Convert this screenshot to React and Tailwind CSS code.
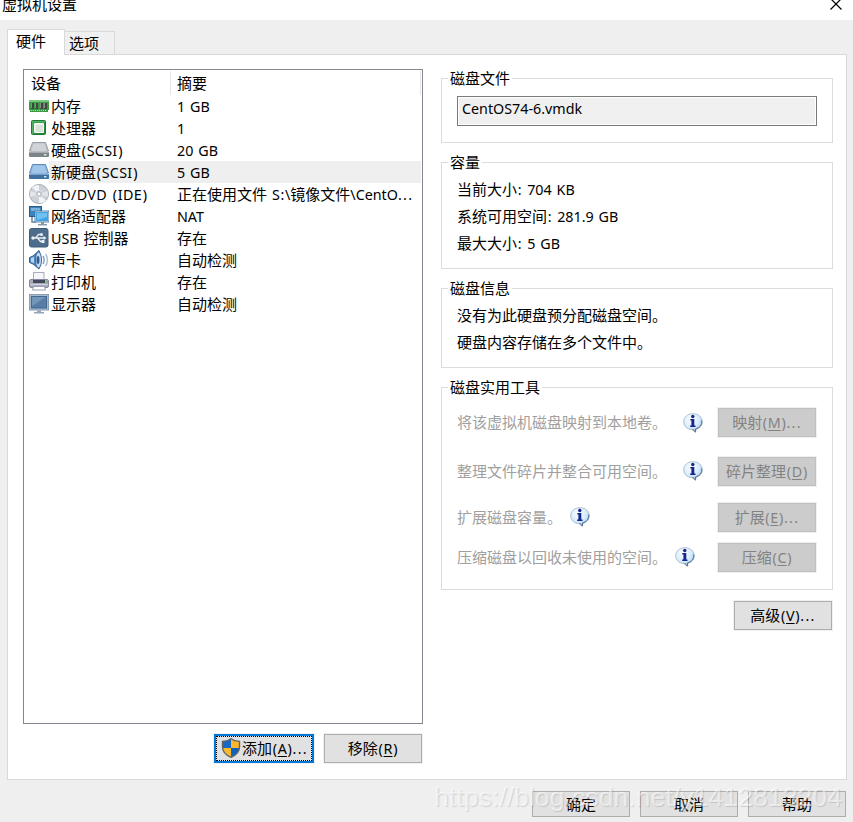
import React from 'react'
import clsx from 'clsx'

// ─── Text helpers ─────────────────────────────────────────────────────────────
// Latin runs use a narrower face than the CJK glyphs around them
function Latin({ text }) {
  return (
    <span className="font-['Noto_Sans'] text-[14.3px] leading-none whitespace-pre [word-spacing:1.2px]">
      {text.split(/(\.\.\.|[():])/).map((part, i) => (
        i % 2 ? (
          <span key={i} className={part === '...' ? 'tracking-[1.3px]' : 'px-[0.7px]'}>{part}</span>
        ) : (
          <span key={i} className={clsx(text.includes('(') && 'tracking-[0.3px]')}>{part}</span>
        )
      ))}
    </span>
  )
}

function T({ children }) {
  return children.split(/([\x20-\x7e]+)/).map((part, i) => (i % 2 ? <Latin key={i} text={part} /> : part))
}

function Mnemonic({ label, letter, dots }) {
  return (
    <span className="-mt-px whitespace-nowrap">
      {label}
      <Latin text="(" />
      <span className="font-['Noto_Sans'] text-[14.3px] leading-none underline underline-offset-2">{letter}</span>
      <Latin text={dots ? ')...' : ')'} />
    </span>
  )
}

// ─── Device icons ─────────────────────────────────────────────────────────────
function MemoryIcon() {
  return (
    <>
      <path d="M0 4h20v10h-1v2H1v-2H0z" fill="#3c9a45" />
      <path d="M0 4h20v2H0z" fill="#7cc67e" />
      <path d="M2 7h3v6H2zM6 7h3v6H6zM11 7h3v6h-3zM15 7h3v6h-3z" fill="#3f4541" />
      <path d="M2 7h1v5H2zM6 7h1v5H6zM11 7h1v5h-1zM15 7h1v5h-1z" fill="#8a918c" />
      <path d="M2 14.5h16" stroke="#c9d98a" strokeDasharray="1 1" />
    </>
  )
}

function CpuIcon() {
  return (
    <>
      <rect x="2.500" y="2.500" width="14" height="14" rx="1" fill="#258b3d" stroke="#1d7a37" />
      <path d="M3 3h13v1.500H4.500V16H3z" fill="#55b364" />
      <rect x="5" y="5" width="10" height="10" rx="1" fill="#f6f8f5" />
      <rect x="6.500" y="6.500" width="7.500" height="7.500" fill="#dbe2da" />
    </>
  )
}

function DiskIcon({ blue }) {
  return (
    <>
      <path d="M3.500 2.500h13L19.500 11H.5z" fill={blue ? '#8db5e0' : '#bcc2c8'} stroke={blue ? '#5d89bd' : '#969da5'} />
      <path d="M4.500 3.500h11l2.500 8H2z" fill={blue ? '#a2c6ea' : '#d0d4d8'} />
      <rect x="0" y="12" width="20" height="5" rx="1" fill={blue ? '#436f9f' : '#7c838b'} />
      <path d="M.5 11.500h19v1.500H.5z" fill={blue ? '#79a4d2' : '#a5abb1'} />
      <rect x="15" y="14" width="2.500" height="1.500" fill={blue ? '#b9e8f5' : '#d1f0c4'} />
    </>
  )
}

function DiscIcon() {
  return (
    <>
      <circle cx="10" cy="10" r="9.500" fill="#ccd1d8" stroke="#a4abb5" />
      <path d="M10 10 3 3.500A9 9 0 0 1 10 1zM10 10l7 6.500A9 9 0 0 1 10 19z" fill="#f2f4f7" />
      <path d="M10 10 1.500 13A9 9 0 0 1 1.500 7zM10 10l8.500-3a9 9 0 0 1 0 6z" fill="#e3e6eb" />
      <circle cx="10" cy="10" r="3.500" fill="#b3bac4" stroke="#e8ebef" />
      <circle cx="10" cy="10" r="1.500" fill="#fff" />
    </>
  )
}

function NetworkIcon() {
  return (
    <>
      <rect x=".5" y=".5" width="12" height="10" fill="#3f83bd" stroke="#285b8a" />
      <path d="M2 2h9v3H2z" fill="#7bb2dd" />
      <path d="M3 11v5h4" fill="none" stroke="#6e8499" strokeWidth="1.500" />
      <rect x="6.500" y="5.500" width="13" height="10" fill="#3fa3e4" stroke="#dce8f1" />
      <path d="M8 7h10v4L8 14z" fill="#6fc1f1" />
      <rect x="6" y="5" width="14" height="11" fill="none" stroke="#386a97" strokeWidth=".8" />
      <path d="M12 16h3v2h3v1.500H9V18h3z" fill="#8799aa" />
    </>
  )
}

function UsbIcon() {
  return (
    <>
      <rect x=".5" y=".5" width="18.500" height="18.500" rx="2" fill="#4e6d8c" stroke="#3e5c7a" />
      <g fill="none" stroke="#e9eff5" strokeWidth="1.300">
        <path d="M4 10h11M6.500 10l3-3.500h2.500M8.500 10l3 3.500h2" />
      </g>
      <circle cx="4" cy="10" r="1.700" fill="#e9eff5" />
      <circle cx="12.500" cy="6.500" r="1.500" fill="#e9eff5" />
      <path d="M12.500 12h3v3h-3zM14.500 8l3 2-3 2z" fill="#e9eff5" />
    </>
  )
}

function SoundIcon() {
  return (
    <>
      <path d="M.5 7.500 4 6l6-5.500c2 4 2 14 0 18.500L4 14 .5 12.500z" fill="#4d89c2" stroke="#35608f" />
      <path d="M2 8l3-1v6l-3-1z" fill="#b4d4ef" />
      <ellipse cx="9.500" cy="10" rx="3" ry="8" fill="#c5dbef" stroke="#3c6897" />
      <ellipse cx="9" cy="10" rx="1.500" ry="4" fill="#2f5e92" />
      <path d="M14 6c1.500 2 1.500 6 0 8" fill="none" stroke="#7b9bc0" strokeWidth="1.400" />
      <path d="M16.500 4c2.500 3 2.500 9 0 12" fill="none" stroke="#a9bed7" strokeWidth="1.400" />
    </>
  )
}

function PrinterIcon() {
  return (
    <>
      <rect x="4.500" y=".5" width="10.500" height="8" fill="#f5f6fa" stroke="#a6abbd" />
      <rect x=".5" y="7.500" width="19" height="8" rx="1.500" fill="#a9abbd" stroke="#85889c" />
      <path d="M4 8h12v3H4z" fill="#43485a" />
      <path d="M1 12h18v1H1z" fill="#d0d2de" />
      <rect x="17" y="9.500" width="2" height="1.500" fill="#62bb56" />
      <path d="M4.500 14.500h11l1 3.500h-13z" fill="#fff" stroke="#9b9eb2" />
    </>
  )
}

function DisplayIcon() {
  return (
    <>
      <rect x=".5" y=".5" width="19" height="15.500" fill="#a6bacd" stroke="#8b9fb4" />
      <rect x="2.500" y="2.500" width="15" height="11.500" fill="#557da5" stroke="#45698e" />
      <path d="M3 3h14L3 12z" fill="#7397bb" />
      <path d="M8 16.500h4V18h3v1.500H5V18h3z" fill="#93a6b8" />
    </>
  )
}

function InfoIcon() {
  return (
    <svg viewBox="0 0 20 20" className="size-5 shrink-0">
      <defs>
        <radialGradient id="bubble" cx=".4" cy=".3" r=".75">
          <stop offset="0" stopColor="#fff" />
          <stop offset=".6" stopColor="#d5ebfb" />
          <stop offset="1" stopColor="#8fbce6" />
        </radialGradient>
      </defs>
      <path d="M10 .7c5.300 0 9.200 3.300 9.200 8 0 4-2.700 6.600-6.200 7.500l-.5 3.300L9 16.600C4 16.300.7 13.200.7 8.700c0-4.700 4-8 9.300-8z" fill="url(#bubble)" stroke="#a5b4c5" strokeWidth=".8" />
      <path d="M18.800 7.500c.4 5-2.600 7.500-6.200 8.400l-.3 3-2.800-3" fill="none" stroke="#526d91" />
      <circle cx="9.800" cy="3.500" r="1.700" fill="#17268d" />
      <path d="M7.300 6h4v6.500h1.200V14H7.200v-1.500h1.200V7.500H7.300z" fill="#17268d" />
    </svg>
  )
}

function ShieldIcon() {
  return (
    <svg viewBox="0 0 20 20" className="-mt-px size-5 shrink-0">
      <path d="M10 .8C7.500 2.700 4.500 3.300 1.500 3.400V10H10z" fill="#1768c5" />
      <path d="M10 .8c2.500 1.900 5.500 2.500 8.500 2.600V10H10z" fill="#fcb62b" />
      <path d="M1.500 10c.5 4 4 7.500 8.500 9.300V10z" fill="#f9b92c" />
      <path d="M18.500 10c-.5 4-4 7.500-8.500 9.300V10z" fill="#0f62c0" />
      <path d="M10 .8C7.500 2.700 4.500 3.300 1.500 3.400V9c0 4.500 3.500 8.200 8.500 10.300 5-2.100 8.500-5.800 8.500-10.300V3.400C15.500 3.300 12.500 2.700 10 .8z" fill="none" stroke="#626569" strokeWidth="1.400" />
    </svg>
  )
}

// ─── Data ─────────────────────────────────────────────────────────────────────
const DEVICES = [
  { name: '内存', summary: '1 GB', icon: <MemoryIcon /> },
  { name: '处理器', summary: '1', icon: <CpuIcon /> },
  { name: '硬盘(SCSI)', summary: '20 GB', icon: <DiskIcon /> },
  { name: '新硬盘(SCSI)', summary: '5 GB', icon: <DiskIcon blue />, selected: true },
  { name: 'CD/DVD (IDE)', summary: '正在使用文件 S:\\镜像文件\\CentO...', icon: <DiscIcon /> },
  { name: '网络适配器', summary: 'NAT', icon: <NetworkIcon /> },
  { name: 'USB 控制器', summary: '存在', icon: <UsbIcon /> },
  { name: '声卡', summary: '自动检测', icon: <SoundIcon /> },
  { name: '打印机', summary: '存在', icon: <PrinterIcon /> },
  { name: '显示器', summary: '自动检测', icon: <DisplayIcon /> },
]

// ─── Building blocks ──────────────────────────────────────────────────────────
function Button({ children, disabled, className, frame = 'border border-[#adadad]' }) {
  return (
    <button
      disabled={disabled}
      className={clsx(
        'flex w-[98px] shrink-0 items-center justify-center',
        disabled ? 'border border-[#bfbfbf] bg-[#cccccc] text-[#838383]' : ['bg-[#e1e1e1]', frame],
        className || 'h-[29px] ring-1 ring-[#f0f0f0]'
      )}
    >
      {children}
    </button>
  )
}

function Group({ title, className, children }) {
  return (
    <fieldset className={clsx('border border-[#dcdcdc] px-[15px]', className)}>
      <legend className="-ml-[9px] h-[21px] px-[2px] leading-[19px]">{title}</legend>
      {children}
    </fieldset>
  )
}

function Tool({ text, gap, children, className }) {
  return (
    <div className={clsx('flex h-[29px] items-center text-[#a0a0a0]', className)}>
      <span className="whitespace-nowrap">{text}</span>
      <span className={gap}><InfoIcon /></span>
      <span className="mr-px ml-auto">{children}</span>
    </div>
  )
}

function DeviceList() {
  return (
    <div className="h-[655px] w-[400px] border border-[#828790] bg-white">
      <div className="flex h-[25px] pt-px pr-px">
        <div className="w-[147px] border-r border-[#e5e5e5] pl-[7px] leading-[23px]">设备</div>
        <div className="flex-1 border-r border-[#e5e5e5] pl-[6px] leading-[23px]">摘要</div>
      </div>
      {DEVICES.map((d) => (
        <div key={d.name} className="flex h-[22px] pr-px pl-[5px] leading-[21px]">
          <svg viewBox="0 0 20 20" className="mt-px size-5 shrink-0">{d.icon}</svg>
          <div className={clsx('flex flex-1 whitespace-nowrap', d.selected && 'bg-[#efefef]')}>
            <span className="w-[128px] pl-[2px]"><T>{d.name}</T></span>
            <span><T>{d.summary}</T></span>
          </div>
        </div>
      ))}
    </div>
  )
}

export default function App() {
  return (
    <div className="relative flex h-[822px] w-[853px] flex-col overflow-hidden bg-[#efefef] font-['Noto_Sans_CJK_SC','Noto_Sans',sans-serif] text-[15px] text-black">
      <header className="flex h-5 shrink-0 items-start justify-between bg-white pr-[10px] pl-[2px]">
        <span className="-mt-[7px] leading-[22px]">虚拟机设置</span>
        <svg viewBox="0 0 14 14" className="-mt-[3px] size-[14px]">
          <path d="M1.500 1.500l11 11M12.500 1.500l-11 11" stroke="#000" strokeWidth="1.200" />
        </svg>
      </header>

      <nav className="flex h-[34px] shrink-0 items-end pl-[7px]">
        <div className="relative z-10 -mb-px h-[26px] w-[58px] border border-b-0 border-[#d9d9d9] bg-white pl-[8px] leading-[22px]">硬件</div>
        <div className="h-[23px] w-[50px] border border-b-0 border-l-0 border-[#d9d9d9] bg-[#f0f0f0] pl-[4px] leading-[21px]">选项</div>
      </nav>

      <main className="ml-[7px] flex h-[726px] w-[840px] shrink-0 border border-[#d9d9d9] bg-white pl-[15px]">
        <section className="flex flex-col gap-[10px] pt-[14px]">
          <DeviceList />
          <div className="flex justify-end gap-[10px] pr-px">
            <Button frame="border-2 border-[#0078d7]" className="h-[29px] min-w-[100px] ring-1 ring-[#f0f0f0]">
              <span className="flex h-full w-full items-center border border-dotted border-black pl-[4px]">
                <ShieldIcon />
                <span className="ml-px"><Mnemonic label="添加" letter="A" dots /></span>
              </span>
            </Button>
            <Button><Mnemonic label="移除" letter="R" /></Button>
          </div>
        </section>

        <section className="ml-[18px] flex w-[392px] flex-col gap-[9px] pt-[13px]">
          <Group title="磁盘文件" className="h-[75px]">
            <div className="mt-[7px] h-[30px] w-[360px] border border-[#7a7a7a] bg-[#f0f0f0] pl-[4px] leading-[21px] shadow-[inset_0_0_0_1px_#fff]">
              <T>CentOS74-6.vmdk</T>
            </div>
          </Group>
          <Group title="容量" className="h-[117px]">
            <div className="mt-[2px] leading-[27px]">
              <p><T>当前大小: 704 KB</T></p>
              <p><T>系统可用空间: 281.9 GB</T></p>
              <p><T>最大大小: 5 GB</T></p>
            </div>
          </Group>
          <Group title="磁盘信息" className="h-[90px]">
            <div className="mt-[2px] leading-[27px]">
              <p>没有为此硬盘预分配磁盘空间。</p>
              <p>硬盘内容存储在多个文件中。</p>
            </div>
          </Group>
          <Group title="磁盘实用工具" className="h-[213px]">
            <Tool text="将该虚拟机磁盘映射到本地卷。" gap="ml-4" className="mt-[10px]">
              <Button disabled><Mnemonic label="映射" letter="M" dots /></Button>
            </Tool>
            <Tool text="整理文件碎片并整合可用空间。" gap="ml-4 -mt-px" className="mt-5">
              <Button disabled><Mnemonic label="碎片整理" letter="D" /></Button>
            </Tool>
            <Tool text="扩展磁盘容量。" gap="ml-2 -mt-px" className="mt-[17px]">
              <Button disabled><Mnemonic label="扩展" letter="E" dots /></Button>
            </Tool>
            <Tool text="压缩磁盘以回收未使用的空间。" gap="ml-2 -mt-px" className="mt-[11px]">
              <Button disabled><Mnemonic label="压缩" letter="C" /></Button>
            </Tool>
          </Group>
          <div className="mt-[2px] mr-px self-end">
            <Button><Mnemonic label="高级" letter="V" dots /></Button>
          </div>
        </section>
      </main>

      <footer className="flex justify-end gap-[10px] pt-[11px] pr-[7px]">
        <Button className="h-[26px]">确定</Button>
        <Button className="h-[26px]">取消</Button>
        <Button className="h-[26px]">帮助</Button>
      </footer>

      <div className="pointer-events-none absolute top-[782px] left-[434px] font-['Liberation_Sans',sans-serif] text-[26.700px] leading-[30px] whitespace-nowrap text-white/55 [text-shadow:1px_1px_1px_rgba(0,0,0,0.12)]">
        https://blog.csdn.net/y1412813204
      </div>
    </div>
  )
}
